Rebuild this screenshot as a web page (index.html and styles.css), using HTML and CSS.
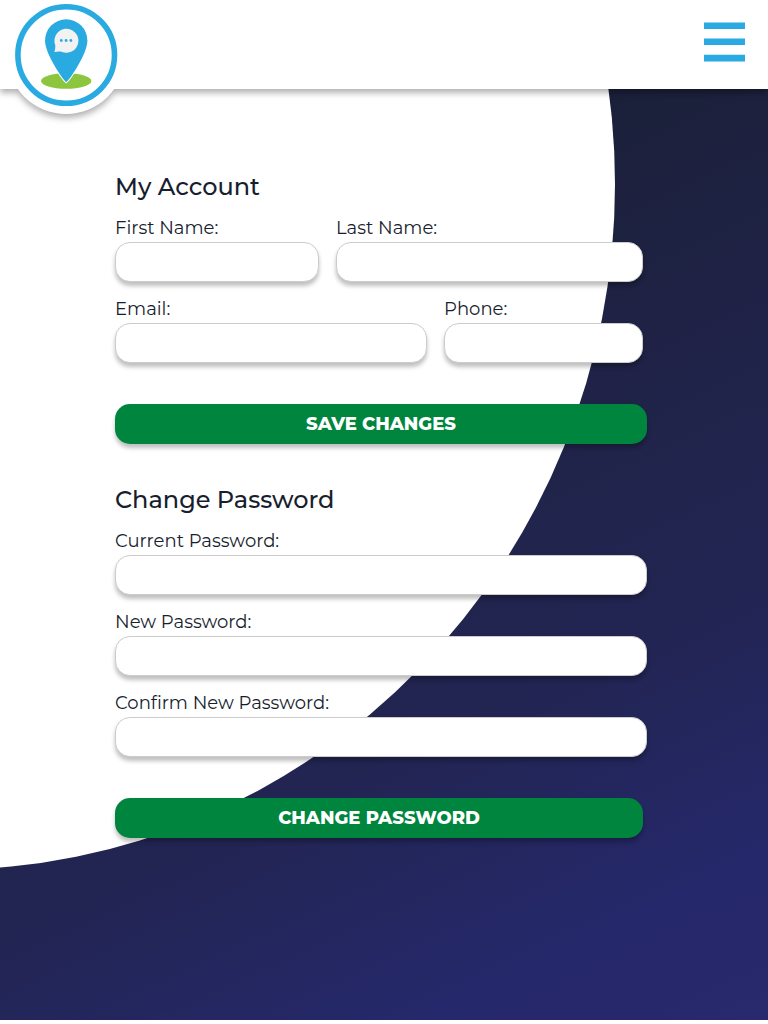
FILE: index.html
```html
<!DOCTYPE html>
<html lang="en">
<head>
<meta charset="utf-8">
<title>My Account</title>
<link rel="stylesheet" href="styles.css">
</head>
<body>
<div class="page">
  <svg class="backdrop" viewBox="0 0 768 1020" aria-hidden="true"><ellipse cx="-54.5" cy="184.3" rx="669.5" ry="685.6" fill="#fff"/></svg>
  <header class="header">
    <a class="logo" href="#" aria-label="Home">
      <svg viewBox="0 0 118 118">
        <circle cx="59" cy="59" r="59" fill="#fff"/>
        <circle cx="59.2" cy="59" r="48.3" fill="none" stroke="#29abe2" stroke-width="5.6"/>
        <ellipse cx="59.2" cy="85" rx="25.2" ry="7.8" fill="#8cc63f"/>
        <path d="M59.2 86.200C56 84 38 58 38 44.500a21.200 21.200 0 0 1 42.400 0C80.400 58 62.400 84 59.200 86.200Z" fill="#29abe2" stroke="#fff" stroke-width="2" paint-order="stroke"/>
        <path d="M47.300 56C48 54.500 48.300 52.500 48.300 49.300A12 12 0 1 1 54.500 55.700C52 55.200 50 55.500 47.300 56Z" fill="#f2f2f2"/>
        <g fill="#29abe2"><circle cx="54.300" cy="44.500" r="1.400"/><circle cx="59.100" cy="44.500" r="1.400"/><circle cx="63.900" cy="44.500" r="1.400"/></g>
      </svg>
    </a>
    <button class="menu" type="button" aria-label="Menu"><svg viewBox="0 0 41 40"><path d="M0 .4h41v6.500H0zM0 16.400h41v6.500H0zM0 32.700h41v6.700H0z" fill="#29abe2"/></svg></button>
  </header>
  <main class="content">
    <form class="form">
      <h1 class="title">My Account</h1>
      <div class="row">
        <label class="field first"><span class="name">First Name:</span><input class="input" type="text"></label>
        <label class="field last"><span class="name">Last Name:</span><input class="input" type="text"></label>
      </div>
      <div class="row">
        <label class="field email"><span class="name">Email:</span><input class="input" type="email"></label>
        <label class="field phone"><span class="name">Phone:</span><input class="input" type="tel"></label>
      </div>
      <button class="button" type="button">SAVE CHANGES</button>
    </form>
    <form class="form">
      <h1 class="title">Change Password</h1>
      <label class="field"><span class="name">Current Password:</span><input class="input" type="password"></label>
      <label class="field"><span class="name">New Password:</span><input class="input" type="password"></label>
      <label class="field"><span class="name">Confirm New Password:</span><input class="input" type="password"></label>
      <button class="button narrow" type="button">CHANGE PASSWORD</button>
    </form>
  </main>
</div>
</body>
</html>
```
FILE: styles.css
```css
* { box-sizing: border-box; }
body { margin: 0; background: #fff; color: #171e2e; font-family: Montserrat, Inter, sans-serif; font-variant-ligatures: none; }
.page { position: relative; height: 1020px; overflow: hidden; background: linear-gradient(155deg, #191e2d 12%, #1b203a 28%, #202348 50%, #222552 68%, #25286a 88%, #29296e 100%); }
.backdrop { position: absolute; inset: 0; width: 768px; height: 1020px; }
.header { position: relative; display: flex; justify-content: space-between; height: 89px; padding: 0 23px 0 7px; background: #fff; filter: drop-shadow(0 4px 3px rgba(0,0,0,.3)); }
.logo { width: 118px; height: 118px; margin-top: -4px; }
.logo svg, .menu svg { display: block; width: 100%; height: 100%; }
.menu { width: 41px; height: 40px; margin-top: 22px; padding: 0; border: 0; background: none; }
.content { position: relative; width: 532px; margin: 83px 0 0 115px; display: flex; flex-direction: column; gap: 41px; }
.form { display: flex; flex-direction: column; }
.title { margin: 0 0 15px; font-size: 24px; line-height: 30px; font-weight: 500; white-space: nowrap; }
.row { display: flex; gap: 17px; width: 528px; }
.field { display: flex; flex-direction: column; margin-bottom: 16px; }
.first { width: 204px; }
.last { width: 307px; }
.email { width: 312px; }
.phone { width: 199px; }
.name { height: 25px; font-size: 18px; line-height: 22px; font-weight: 400; white-space: nowrap; }
.input { width: 100%; height: 40px; padding: 0 14px; border: 1px solid #ccc; border-radius: 15px; background: #fff; font: inherit; box-shadow: 0 4px 4px rgba(0,0,0,.25); }
.button { height: 40px; margin-top: 25px; padding: 0; border: 0; border-radius: 15px; background: #00853e; color: #fff; font: 800 18px/40px Montserrat, Inter, sans-serif; box-shadow: 0 4px 4px rgba(0,0,0,.25); }
.narrow { width: 528px; }
```
